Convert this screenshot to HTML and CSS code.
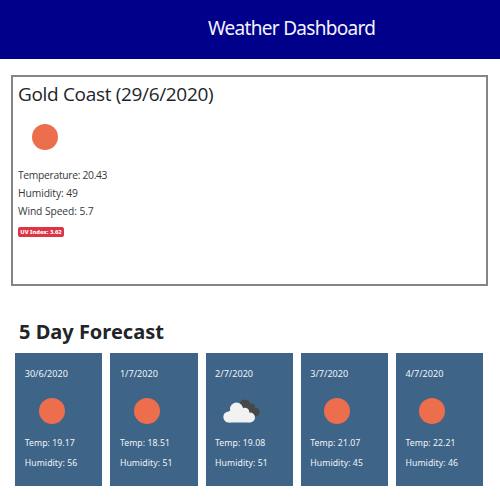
FILE: index.html
```html
<!DOCTYPE html>
<html lang="en">
<head>
<meta charset="utf-8">
<title>Weather Dashboard</title>
<link rel="stylesheet" href="styles.css">
</head>
<body>
<header class="banner"><h1 class="title">Weather Dashboard</h1></header>
<main>
<section class="current">
<h2 class="city">Gold Coast (29/6/2020)</h2>
<svg class="icon" viewBox="0 0 54 54"><circle cx="27" cy="27" r="13"/></svg>
<p class="stat temperature">Temperature: 20.43</p>
<p class="stat humid">Humidity: 49</p>
<p class="stat wind">Wind Speed: 5.7</p>
<span class="badge">UV Index: 3.62</span>
</section>
<h2 class="forecast-title">5 Day Forecast</h2>
<section class="forecast">
<article class="card"><h3 class="date">30/6/2020</h3><svg class="icon" viewBox="0 0 54 54"><circle cx="27" cy="27" r="13"/></svg><p>Temp: 19.17</p><p>Humidity: 56</p></article>
<article class="card"><h3 class="date">1/7/2020</h3><svg class="icon" viewBox="0 0 54 54"><circle cx="27" cy="27" r="13"/></svg><p>Temp: 18.51</p><p>Humidity: 51</p></article>
<article class="card"><h3 class="date">2/7/2020</h3><svg class="icon" viewBox="0 0 54 54"><g class="cloud-back"><circle cx="30" cy="21" r="5.500"/><circle cx="36" cy="23.500" r="4"/><circle cx="40.500" cy="28" r="4.200"/><path d="M28 21H36L41 32H28Z"/></g><g class="cloud-front"><circle cx="13.800" cy="33" r="5.500"/><circle cx="21.500" cy="25" r="6.500"/><circle cx="30" cy="28" r="4.300"/><circle cx="35" cy="33.500" r="5"/><path d="M13.800 27.500L20 23L31 26L35 38.500H13.800Z"/></g></svg><p>Temp: 19.08</p><p>Humidity: 51</p></article>
<article class="card"><h3 class="date">3/7/2020</h3><svg class="icon" viewBox="0 0 54 54"><circle cx="27" cy="27" r="13"/></svg><p>Temp: 21.07</p><p>Humidity: 45</p></article>
<article class="card"><h3 class="date">4/7/2020</h3><svg class="icon" viewBox="0 0 54 54"><circle cx="27" cy="27" r="13"/></svg><p>Temp: 22.21</p><p>Humidity: 46</p></article>
</section>
</main>
</body>
</html>
```
FILE: styles.css
```css
* { box-sizing: border-box; }
body { margin: 0; background: #fff; color: #212529; font-family: "Noto Sans", "Open Sans", sans-serif; }
h1, h2, h3, p { margin: 0; font-weight: 400; white-space: nowrap; }
.banner { height: 59px; padding: 15px 0 0 208px; background: #00008b; color: #f4f4fa; }
.title { font-size: 19px; line-height: 27px; letter-spacing: -0.7px; }
main { padding: 16px 12px 0 11px; }
.current { height: 211px; border: 2px solid #858585; padding: 4px 5px; }
.city { font-family: "Open Sans", sans-serif; font-size: 19px; line-height: 26px; letter-spacing: -0.33px; }
.icon { display: block; width: 54px; height: 54px; fill: #ec6e4c; }
.current .icon { margin-top: 2.5px; }
.stat { font-family: "Open Sans", sans-serif; font-size: 10.3px; line-height: 18px; color: #34383c; }
.temperature { margin-top: 2.5px; letter-spacing: -0.3px; }
.humid, .wind { letter-spacing: -0.1px; }
.badge { display: block; width: 46px; height: 10px; margin-top: 7px; border-radius: 2px; background: #dc3545; color: #fff; font-size: 5.8px; line-height: 10px; font-weight: 800; text-align: center; white-space: nowrap; }
.forecast-title { margin: 30px 0 0 8px; font-size: 20px; line-height: 31px; font-weight: 700; }
.forecast { display: grid; grid-template-columns: repeat(5, 87.3px); gap: 7.9px; margin: 6px 0 0 4.2px; }
.card { height: 133px; padding: 11px 0 0 9.5px; background: #3e6488; color: #f0f4f7; }
.date { font-size: 9.1px; line-height: 19px; }
.card .icon { margin: 1px 0 -5px; }
.card p { font-size: 8.7px; line-height: 20px; letter-spacing: 0.07px; }
.cloud-back { fill: #484848; }
.cloud-front { fill: #f2f2f2; }
```
